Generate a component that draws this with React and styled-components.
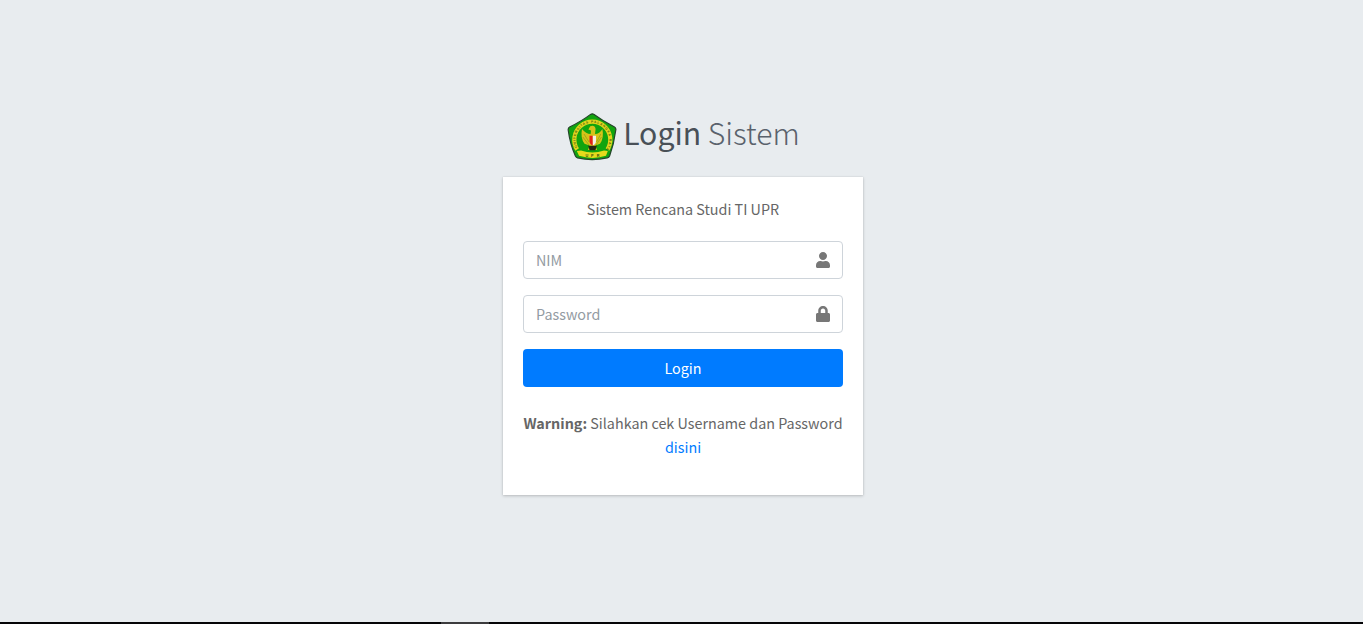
import React from 'react';
import styled, { createGlobalStyle } from 'styled-components';
import { FaUser, FaLock } from 'react-icons/fa';

const GlobalStyle = createGlobalStyle`
  * { box-sizing: border-box; }
  body {
    margin: 0;
    background: #e8ecef;
    color: #212529;
    font-family: "Source Sans Pro", "Noto Sans CJK JP", sans-serif;
    font-size: 14.35px;
    line-height: 24px;
  }
`;

const Page = styled.div`
  height: 624px;
  display: flex;
  flex-direction: column;
  background: #e8ecef;
  overflow: hidden;
`;

const Main = styled.main`
  flex: 1;
  padding: 112px 0 0 3px;
  display: flex;
  flex-direction: column;
  align-items: center;
`;

const Brand = styled.h1`
  margin: 0;
  height: 65px;
  padding-left: 1px;
  display: flex;
  align-items: flex-start;
  gap: 6px;
  color: #5a626c;
  font-size: 30.2px;
  line-height: 40px;
  font-weight: 200;
  b { font-weight: 400; color: #495057; }
`;

const Emblem = styled.svg`
  display: block;
  width: 50px;
  height: 49px;
`;

const Card = styled.section`
  width: 360px;
  height: 318px;
  padding: 20px;
  background: #fff;
  box-shadow: 0 0 1px rgba(0, 0, 0, 0.125), 0 1px 3px rgba(0, 0, 0, 0.2);
  color: #666;
  text-align: center;
`;

const Message = styled.p`
  margin: 0 0 20px;
`;

const Field = styled.label`
  display: flex;
  align-items: center;
  height: 38px;
  margin-bottom: 16px;
  padding: 0 12px;
  border: 1px solid #ced4da;
  border-radius: 4px;
  color: #777;
  svg { flex: none; width: 14px; height: 16px; }
`;

const Input = styled.input`
  flex: 1;
  min-width: 0;
  height: 24px;
  padding: 0;
  border: 0;
  outline: 0;
  background: transparent;
  font: inherit;
  &::placeholder { color: #939ba2; opacity: 1; }
`;

const Button = styled.button`
  display: block;
  width: 100%;
  height: 38px;
  padding: 0;
  border: 0;
  border-radius: 4px;
  background: #007bff;
  color: #fff;
  font: inherit;
`;

const Warning = styled.p`
  margin: 24px -10px 0;
  a { color: #007bff; text-decoration: none; }
`;

const BottomEdge = styled.footer`
  height: 2px;
  padding-left: 441px;
  background: #050507;
`;

const EdgeMark = styled.div`
  width: 48px;
  height: 2px;
  background: #3c3c3e;
`;

function UniversityEmblem() {
  return (
    <Emblem viewBox="5 4 50 49" role="img" aria-label="Universitas Palangka Raya">
      <path d="M28.5 6.4 Q30.3 5.2 32.1 6.4 Q41 13 52.5 19 Q54.2 20 53.8 22 Q52 36 47.6 48 Q47 49.4 45.2 49.8 Q30 53.4 15.5 49.8 Q14 49.4 13.4 48 Q8 36 6.2 22 Q6 20 7.6 19 Q20 13 28.5 6.4Z" fill="#12a40f" stroke="#24452a" strokeWidth="1.2" strokeLinejoin="round" />
      <path d="M15.2 41.5 A18 18 0 1 1 45.4 41.5" fill="none" stroke="#e0d41c" strokeWidth="4.2" />
      <path d="M14.8 43 L19 42.4 Q30.5 46.4 42 42.4 L45.8 43 L44 47.8 Q30.5 52 17 47.8Z" fill="#e6da1c" />
      <defs><path id="emblem-arc" d="M16.2 41 A16.9 16.9 0 1 1 44.4 41" /></defs>
      <text fontFamily="Liberation Sans, sans-serif" fontWeight="700" fontSize="3.3" fill="#35500c" fillOpacity=".85">
        <textPath href="#emblem-arc" startOffset="2" textLength="71">UNIVERSITAS PALANGKA RAYA</textPath>
      </text>
      <text x="31.9" y="49" textAnchor="middle" fontFamily="Liberation Sans, sans-serif" fontWeight="700" fontSize="3.8" letterSpacing="3" fill="#35500c">UPR</text>
      <path d="M28.2 18.2 Q32.8 16.6 33.6 21 L33 26 Q37.5 26 40.4 21 Q42.2 30 38 35.7 L33.5 37.5 L35 42 H26 L27.5 37.5 L22.5 35.7 Q18.2 30 20 21 Q24 26 28.6 26 L29 22.5 L26.4 21.5Z" fill="#d6c319" />
      <path d="M22 26 L27 34 M20.8 29 L27 37 M38.8 26 L34.5 34 M39.5 29 L34 37" stroke="#7d9818" strokeWidth=".6" />
      <path d="M27.5 27.8 H30.8 V37.5 Q27.5 36 27.5 33Z" fill="#e32018" />
      <path d="M30.8 27.8 H34 V33 Q34 36 30.8 37.5Z" fill="#f6f2e8" />
      <path d="M26.2 37.8 H34.8 L33.4 42.3 H27.6Z" fill="#242510" />
    </Emblem>
  );
}

export default function App() {
  return (
    <>
      <GlobalStyle />
      <Page>
        <Main>
          <Brand>
            <UniversityEmblem />
            <span><b>Login</b> Sistem</span>
          </Brand>
          <Card>
            <Message>Sistem Rencana Studi TI UPR</Message>
            <form onSubmit={(event) => event.preventDefault()}>
              <Field><Input aria-label="NIM" placeholder="NIM" /><FaUser /></Field>
              <Field><Input type="password" aria-label="Password" placeholder="Password" /><FaLock /></Field>
              <Button>Login</Button>
            </form>
            <Warning><b>Warning:</b> Silahkan cek Username dan Password<br /><a href="#disini">disini</a></Warning>
          </Card>
        </Main>
        <BottomEdge><EdgeMark /></BottomEdge>
      </Page>
    </>
  );
}
